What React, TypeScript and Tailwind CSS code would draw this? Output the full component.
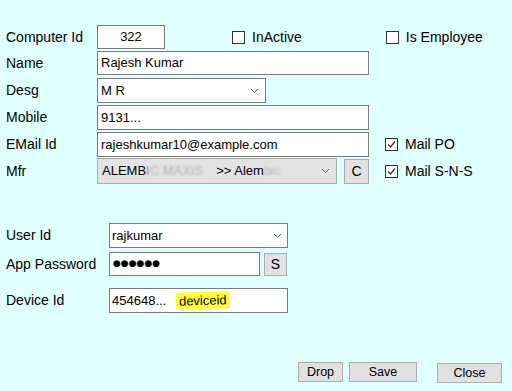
import React from "react";

const Chevron = () => (
  <svg width="9" height="6" viewBox="0 0 9 6" className="shrink-0">
    <path d="M1 1 L4.5 4.5 L8 1" fill="none" stroke="#555" strokeWidth="1" />
  </svg>
);

const Check = ({ checked, label }: { checked?: boolean; label: string }) => (
  <div className="flex items-center">
    <div className="w-[13px] h-[13px] border border-[#333] bg-white flex items-center justify-center">
      {checked && (
        <svg width="11" height="11" viewBox="0 0 11 11">
          <path d="M2 5.5 L4.5 8 L9 2.5" fill="none" stroke="#333" strokeWidth="1.2" />
        </svg>
      )}
    </div>
    <span className="ml-[7px] text-[14px]">{label}</span>
  </div>
);

const Label = ({ children, wide }: { children: React.ReactNode; wide?: boolean }) => (
  <div className={`${wide ? "w-[109px]" : "w-[97px]"} shrink-0 text-[14px] pl-[6px]`}>{children}</div>
);

const Btn = ({ children, className }: { children: React.ReactNode; className: string }) => (
  <div
    className={`bg-[#e1e1e1] border border-[#adadad] flex items-center justify-center text-[12.5px] ${className}`}
  >
    {children}
  </div>
);

export default function App() {
  return (
    <div
      className="w-[512px] h-[391px] bg-[#e0ffff] text-black relative overflow-hidden"
      style={{ fontFamily: '"Liberation Sans", Arial, sans-serif' }}
    >
      <div className="pt-[25px]">
        {/* Computer Id */}
        <div className="flex items-center h-[24px]">
          <Label>Computer Id</Label>
          <div className="w-[68px] h-[24px] border border-[#7a7a7a] bg-white flex items-center justify-center text-[13px]">
            322
          </div>
          <div className="ml-[67px]">
            <Check label="InActive" />
          </div>
          <div className="ml-[84px]">
            <Check label="Is Employee" />
          </div>
        </div>

        {/* Name */}
        <div className="flex items-center h-[24px] mt-[2px]">
          <Label>Name</Label>
          <div className="w-[272px] h-[24px] border border-[#7a7a7a] bg-white flex items-center pl-[3px] text-[13px]">
            Rajesh Kumar
          </div>
        </div>

        {/* Desg */}
        <div className="flex items-center h-[25px] mt-[3px]">
          <Label>Desg</Label>
          <div className="w-[169px] h-[25px] border border-[#7a7a7a] bg-white flex items-center justify-between pl-[3px] pr-[6px] text-[13px]">
            <span>M R</span>
            <Chevron />
          </div>
        </div>

        {/* Mobile */}
        <div className="flex items-center h-[25px] mt-[2px]">
          <Label>Mobile</Label>
          <div className="w-[272px] h-[25px] border border-[#7a7a7a] bg-white flex items-center pl-[3px] text-[13px]">
            9131...
          </div>
        </div>

        {/* Email */}
        <div className="flex items-center h-[25px] mt-[2px]">
          <Label>EMail Id</Label>
          <div className="w-[272px] h-[25px] border border-[#7a7a7a] bg-white flex items-center pl-[3px] text-[13px]">
            rajeshkumar10@example.com
          </div>
          <div className="ml-[16px]">
            <Check checked label="Mail PO" />
          </div>
        </div>

        {/* Mfr */}
        <div className="flex items-center h-[26px] mt-[1px]">
          <Label>Mfr</Label>
          <div className="w-[240px] h-[26px] border border-[#adadad] bg-[#e3e3e3] flex items-center justify-between pl-[4px] pr-[6px] text-[13px]">
            <span className="whitespace-nowrap">
              ALEMB<span className="text-[#9a9a9a] blur-[0.6px]">I</span>
              <span className="text-[#b0b0b0] blur-[0.8px]">C MAXIS</span>
              <span className="ml-[13px]">&gt;&gt; Alem</span>
              <span className="text-[#b5b5b5] blur-[0.8px]">bic</span>
            </span>
            <Chevron />
          </div>
          <Btn className="ml-[7px] w-[25px] h-[25px] text-[14px]">C</Btn>
          <div className="ml-[16px]">
            <Check checked label="Mail S-N-S" />
          </div>
        </div>

        {/* User Id */}
        <div className="flex items-center h-[25px] mt-[39px]">
          <Label wide>User Id</Label>
          <div className="w-[179px] h-[25px] border border-[#7a7a7a] bg-white flex items-center justify-between pl-[2px] pr-[5px] text-[13px]">
            <span>rajkumar</span>
            <Chevron />
          </div>
        </div>

        {/* App Password */}
        <div className="flex items-center h-[24px] mt-[4px]">
          <Label wide>App Password</Label>
          <div className="w-[151px] h-[24px] border border-[#7a7a7a] bg-white flex items-center pl-[3px]">
            <span className="text-[9px]" style={{ fontFamily: '"DejaVu Sans", sans-serif' }}>
              ●●●●●●
            </span>
          </div>
          <Btn className="ml-[4px] w-[23px] h-[23px] text-[14px]">S</Btn>
        </div>

        {/* Device Id */}
        <div className="flex items-center h-[25px] mt-[12px]">
          <Label wide>Device Id</Label>
          <div className="w-[179px] h-[25px] border border-[#7a7a7a] bg-white flex items-center pl-[2px] text-[13px]">
            <span>454648...</span>
            <span className="ml-[10px] bg-[#ffff33] px-[3px] rounded-[3px] -rotate-2 leading-[17px]">deviceid</span>
          </div>
        </div>

        {/* Buttons */}
        <div className="flex items-start mt-[49px] pl-[298px]">
          <Btn className="w-[45px] h-[20px]">Drop</Btn>
          <Btn className="ml-[6px] w-[68px] h-[20px]">Save</Btn>
          <Btn className="ml-[20px] mt-[1px] w-[65px] h-[20px]">Close</Btn>
        </div>
      </div>
    </div>
  );
}
